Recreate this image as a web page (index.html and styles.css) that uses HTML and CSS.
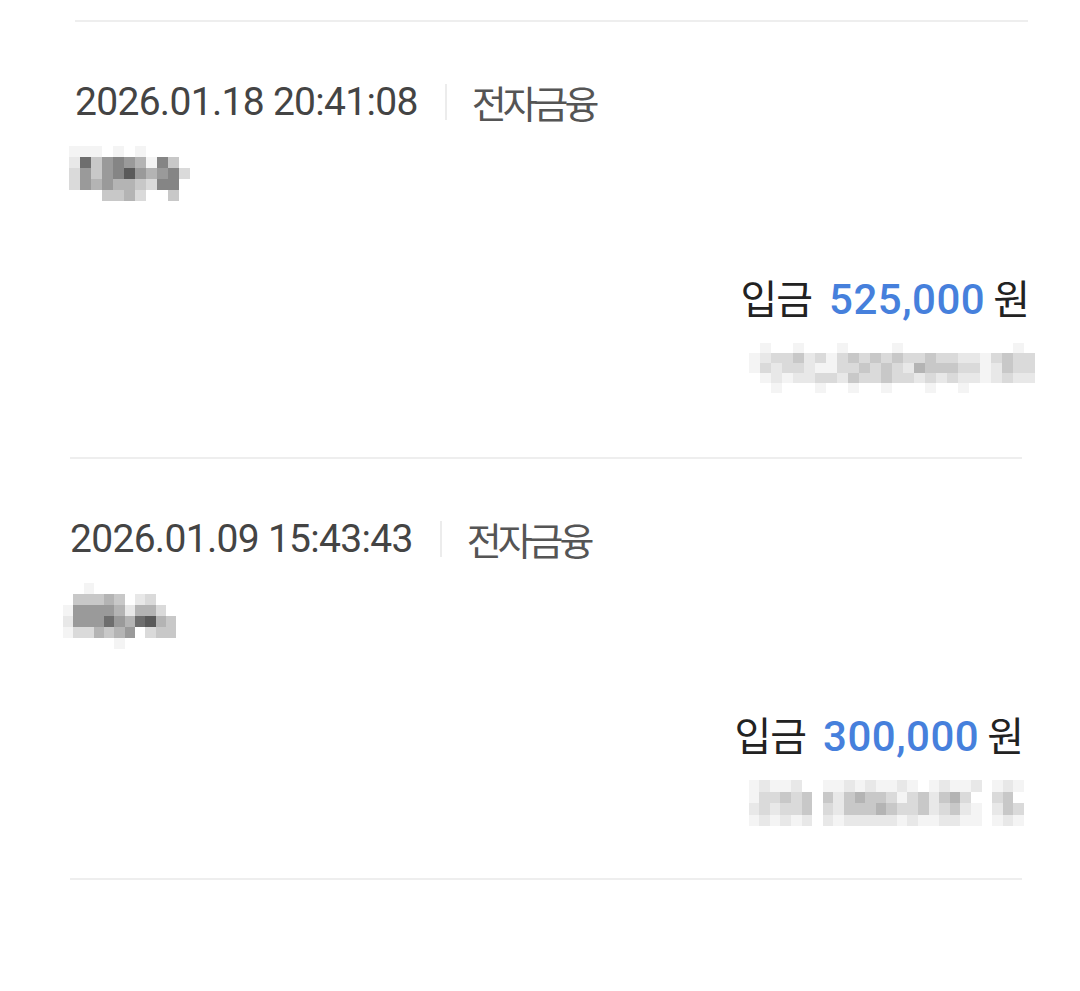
FILE: index.html
```html
<!DOCTYPE html>
<html lang="ko">
<head>
  <meta charset="UTF-8" />
  <meta name="viewport" content="width=device-width, initial-scale=1.0"/>
  <title>거래내역</title>
  <link rel="stylesheet" href="styles.css">
</head>
<body>

  <ul class="tx-list">
    <li class="tx tx-first">
      <div class="tx-meta">
        <span class="tx-date">2026.01.18 20:41:08</span>
        <span class="tx-sep"></span>
        <span class="tx-type">전자금융</span>
      </div>
      <div class="tx-name">
        <!-- 가려진 이름 -->
        <div class="blur blur-name">
          <i class="a"></i><i class="a"></i><i class="a"></i><i></i><i class="a"></i><i></i><i class="a"></i><i></i><i></i><i></i><i></i>
          <i class="b"></i><i class="h"></i><i class="d"></i><i class="f"></i><i class="g"></i><i class="f"></i><i class="e"></i><i class="a"></i><i class="g"></i><i class="d"></i><i></i>
          <i class="c"></i><i class="f"></i><i class="d"></i><i class="f"></i><i class="g"></i><i class="i"></i><i class="f"></i><i class="e"></i><i class="f"></i><i class="g"></i><i class="c"></i>
          <i class="c"></i><i class="f"></i><i class="e"></i><i class="f"></i><i class="e"></i><i class="e"></i><i class="d"></i><i class="c"></i><i class="g"></i><i class="g"></i><i></i>
          <i></i><i></i><i></i><i class="d"></i><i class="d"></i><i class="e"></i><i class="c"></i><i></i><i></i><i class="d"></i><i></i>
        </div>
      </div>
      <div class="tx-amount">
        <span class="tx-kind">입금</span>
        <span class="tx-value">525,000</span>
        <span class="tx-unit">원</span>
      </div>
      <div class="tx-balance">
        <!-- 가려진 잔액 -->
        <div class="blur blur-acct">
          <i></i><i class="a"></i><i></i><i></i><i class="a"></i><i></i><i></i><i></i><i class="a"></i><i></i><i></i><i></i><i></i><i class="a"></i><i></i><i></i><i></i><i></i><i></i><i></i><i></i><i></i><i></i><i></i><i class="a"></i><i></i>
          <i class="a"></i><i class="b"></i><i class="c"></i><i class="c"></i><i class="d"></i><i class="b"></i><i class="c"></i><i class="a"></i><i class="c"></i><i class="d"></i><i class="c"></i><i class="d"></i><i class="c"></i><i class="d"></i><i class="c"></i><i class="c"></i><i class="d"></i><i class="c"></i><i class="c"></i><i class="b"></i><i class="b"></i><i class="a"></i><i class="c"></i><i class="d"></i><i class="c"></i><i class="c"></i>
          <i class="a"></i><i class="c"></i><i class="b"></i><i class="c"></i><i class="c"></i><i class="b"></i><i class="a"></i><i class="a"></i><i class="c"></i><i class="c"></i><i class="d"></i><i class="c"></i><i class="d"></i><i class="c"></i><i class="b"></i><i class="e"></i><i class="d"></i><i class="d"></i><i class="d"></i><i class="c"></i><i class="c"></i><i class="a"></i><i class="b"></i><i class="d"></i><i class="c"></i><i class="c"></i>
          <i></i><i class="a"></i><i class="b"></i><i class="a"></i><i class="b"></i><i class="b"></i><i class="c"></i><i class="c"></i><i class="b"></i><i class="d"></i><i class="c"></i><i class="c"></i><i class="d"></i><i class="c"></i><i class="c"></i><i class="b"></i><i class="c"></i><i class="b"></i><i class="c"></i><i class="b"></i><i class="b"></i><i class="a"></i><i class="b"></i><i class="c"></i><i class="b"></i><i class="b"></i>
          <i></i><i></i><i class="a"></i><i></i><i></i><i></i><i class="a"></i><i></i><i></i><i class="a"></i><i></i><i></i><i class="a"></i><i></i><i></i><i></i><i class="a"></i><i></i><i></i><i class="a"></i><i></i><i></i><i></i><i></i><i></i><i></i>
        </div>
      </div>
    </li>

    <li class="tx tx-last">
      <div class="tx-meta">
        <span class="tx-date">2026.01.09 15:43:43</span>
        <span class="tx-sep"></span>
        <span class="tx-type">전자금융</span>
      </div>
      <div class="tx-name">
        <div class="blur blur-name blur-name-b">
          <i></i><i></i><i class="a"></i><i></i><i></i><i></i><i></i><i></i><i></i><i></i><i></i>
          <i></i><i class="d"></i><i class="d"></i><i class="d"></i><i class="e"></i><i class="d"></i><i></i><i class="b"></i><i class="c"></i><i></i><i></i>
          <i class="a"></i><i class="f"></i><i class="f"></i><i class="f"></i><i class="f"></i><i class="e"></i><i class="b"></i><i class="e"></i><i class="e"></i><i class="c"></i><i></i>
          <i class="b"></i><i class="f"></i><i class="f"></i><i class="f"></i><i class="h"></i><i class="f"></i><i class="e"></i><i class="h"></i><i class="i"></i><i class="e"></i><i class="d"></i>
          <i class="a"></i><i class="c"></i><i class="c"></i><i class="e"></i><i class="d"></i><i class="e"></i><i class="f"></i><i></i><i class="c"></i><i class="d"></i><i class="d"></i>
          <i></i><i></i><i></i><i></i><i></i><i class="a"></i><i></i><i></i><i></i><i></i><i></i>
        </div>
      </div>
      <div class="tx-amount">
        <span class="tx-kind">입금</span>
        <span class="tx-value">300,000</span>
        <span class="tx-unit">원</span>
      </div>
      <div class="tx-balance">
        <div class="blur blur-acct blur-acct-b">
          <i class="a"></i><i class="b"></i><i class="a"></i><i class="a"></i><i class="b"></i><i></i><i></i><i class="a"></i><i class="a"></i><i class="b"></i><i class="a"></i><i class="b"></i><i class="a"></i><i class="a"></i><i class="b"></i><i class="a"></i><i></i><i class="a"></i><i class="b"></i><i class="a"></i><i class="a"></i><i class="b"></i><i></i><i class="a"></i><i class="b"></i><i class="a"></i>
          <i class="a"></i><i class="c"></i><i class="c"></i><i class="d"></i><i class="c"></i><i class="d"></i><i></i><i class="d"></i><i class="b"></i><i class="d"></i><i class="e"></i><i class="d"></i><i class="d"></i><i class="c"></i><i class="a"></i><i class="c"></i><i class="d"></i><i class="b"></i><i class="d"></i><i class="e"></i><i class="c"></i><i></i><i></i><i class="c"></i><i class="d"></i><i></i>
          <i class="b"></i><i class="c"></i><i class="b"></i><i class="c"></i><i class="c"></i><i class="d"></i><i></i><i class="c"></i><i class="b"></i><i class="d"></i><i class="d"></i><i class="d"></i><i class="e"></i><i class="d"></i><i class="c"></i><i class="c"></i><i class="d"></i><i class="b"></i><i class="c"></i><i class="d"></i><i class="b"></i><i class="a"></i><i></i><i class="b"></i><i class="d"></i><i class="c"></i>
          <i class="a"></i><i class="b"></i><i class="a"></i><i class="b"></i><i class="a"></i><i class="b"></i><i></i><i class="b"></i><i class="a"></i><i class="b"></i><i class="b"></i><i class="b"></i><i class="b"></i><i class="b"></i><i class="a"></i><i class="b"></i><i class="a"></i><i class="a"></i><i class="b"></i><i class="b"></i><i class="a"></i><i class="a"></i><i></i><i class="a"></i><i class="b"></i><i class="a"></i>
        </div>
      </div>
    </li>
  </ul>

</body>
</html>
```

FILE: styles.css
```css
body {
  margin: 0;
  background: #fff;
  font-family: Roboto, "Noto Sans CJK KR", sans-serif;
  color: #333;
}

.tx-list {
  list-style: none;
  margin: 0 0 0 70px;
  padding: 20px 0 0;
  width: 952px;
}

.tx {
  border-top: 2px solid #eeeeee;
  padding: 57px 0 50px;
}

.tx-first {
  margin-left: 5px;
  margin-right: -6px;
  padding-bottom: 66px;
}

.tx-last {
  border-bottom: 2px solid #eeeeee;
}

.tx-meta {
  display: flex;
  align-items: center;
  height: 46px;
}

.tx-date {
  font-size: 39px;
  line-height: 46px;
  letter-spacing: -0.7px;
  color: #444;
}

.tx-sep {
  width: 2px;
  height: 36px;
  background: #ececec;
  margin: 0 25px 0 27px;
}

.tx-type {
  font-family: "Noto Sans CJK KR", sans-serif;
  font-size: 38px;
  line-height: 46px;
  letter-spacing: -4px;
  color: #555;
}

.tx-name {
  margin-top: 21px;
  height: 66px;
}

.tx-amount {
  display: flex;
  justify-content: flex-end;
  align-items: baseline;
  margin-top: 60px;
  height: 50px;
  line-height: 50px;
}

.tx-kind, .tx-unit {
  font-family: "Noto Sans CJK KR", sans-serif;
  font-size: 40px;
  color: #222;
}

.tx-kind {
  letter-spacing: -1px;
  margin-right: 17px;
}

.tx-unit {
  margin-right: -2px;
}

.tx-value {
  font-size: 42px;
  font-weight: 500;
  letter-spacing: 0.5px;
  color: #4680dc;
  margin-right: 8px;
}

.tx-balance {
  display: flex;
  justify-content: flex-end;
  margin-top: 21px;
  height: 48px;
}

/* pixelated (blurred) blocks */
.blur {
  display: grid;
}

.blur i {
  display: block;
}

.blur-name {
  grid-template-columns: repeat(11, 11px);
  grid-auto-rows: 11px;
  margin: 7px 0 0 -6px;
}

.blur-name-b {
  grid-template-columns: repeat(11, 10.3px);
  margin-top: 0;
  margin-left: -7px;
}

.blur-acct {
  grid-template-columns: repeat(26, 11px);
  grid-auto-rows: 10px;
  margin-right: -7px;
}

.blur-acct-b {
  grid-template-columns: repeat(26, 10.6px);
  grid-auto-rows: 11.5px;
  margin-right: -2px;
}

.blur .a { background: #f4f4f4; }
.blur .b { background: #e8e8e8; }
.blur .c { background: #dadada; }
.blur .d { background: #c8c8c8; }
.blur .e { background: #b4b4b4; }
.blur .f { background: #9a9a9a; }
.blur .g { background: #858585; }
.blur .h { background: #6e6e6e; }
.blur .i { background: #5a5a5a; }
```
